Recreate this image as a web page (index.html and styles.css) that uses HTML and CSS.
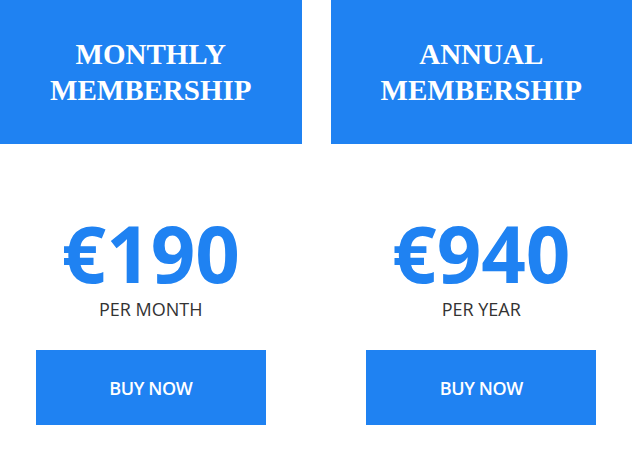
FILE: index.html
```html
<!DOCTYPE html>
<html>
<head>
<meta charset="utf-8">
<link rel="stylesheet" href="styles.css">
</head>
<body>
<div class="plans">
  <div class="plan">
    <div class="head"><h2 class="title">MONTHLY<br>MEMBERSHIP</h2></div>
    <div class="price">€190</div>
    <div class="period">PER MONTH</div>
    <a class="btn">BUY NOW</a>
  </div>
  <div class="plan">
    <div class="head"><h2 class="title">ANNUAL<br>MEMBERSHIP</h2></div>
    <div class="price">€940</div>
    <div class="period">PER YEAR</div>
    <a class="btn">BUY NOW</a>
  </div>
</div>
</body>
</html>
```
FILE: styles.css
```css
html, body {
  margin: 0;
  padding: 0;
  background: #ffffff;
}
.plans {
  display: flex;
  gap: 29px;
  width: 632px;
}
.plan {
  flex: 1;
  display: flex;
  flex-direction: column;
  align-items: center;
}
.head {
  align-self: stretch;
  height: 144px;
  background: #1f82f2;
  display: flex;
  align-items: center;
  justify-content: center;
}
.title {
  margin: 0;
  color: #ffffff;
  font-family: "Liberation Serif", serif;
  font-weight: 700;
  font-size: 29px;
  line-height: 36px;
  text-align: center;
}
.price {
  margin-top: 79px;
  font-family: "Open Sans", sans-serif;
  font-weight: 700;
  font-size: 78px;
  line-height: 60px;
  height: 60px;
  color: #1f82f2;
}
.period {
  margin-top: 17px;
  font-family: "Open Sans", sans-serif;
  font-size: 18px;
  line-height: 18px;
  color: #333333;
}
.btn {
  margin-top: 32px;
  width: 230px;
  height: 75px;
  background: #1f82f2;
  color: #ffffff;
  display: flex;
  align-items: center;
  justify-content: center;
  font-family: "Open Sans", sans-serif;
  font-weight: 600;
  font-size: 18px;
  letter-spacing: -0.4px;
}
```
